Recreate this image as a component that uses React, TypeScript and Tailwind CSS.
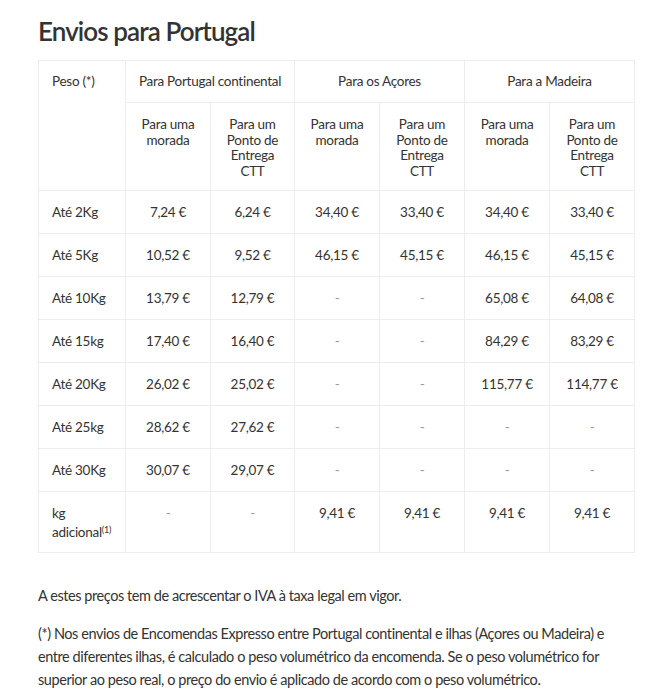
import React from "react";

const rows: { label: React.ReactNode; v: string[] }[] = [
  { label: "Até 2Kg", v: ["7,24 €", "6,24 €", "34,40 €", "33,40 €", "34,40 €", "33,40 €"] },
  { label: "Até 5Kg", v: ["10,52 €", "9,52 €", "46,15 €", "45,15 €", "46,15 €", "45,15 €"] },
  { label: "Até 10Kg", v: ["13,79 €", "12,79 €", "-", "-", "65,08 €", "64,08 €"] },
  { label: "Até 15kg", v: ["17,40 €", "16,40 €", "-", "-", "84,29 €", "83,29 €"] },
  { label: "Até 20Kg", v: ["26,02 €", "25,02 €", "-", "-", "115,77 €", "114,77 €"] },
  { label: "Até 25kg", v: ["28,62 €", "27,62 €", "-", "-", "-", "-"] },
  { label: "Até 30Kg", v: ["30,07 €", "29,07 €", "-", "-", "-", "-"] },
];

const sub = ["Para uma morada", "Para um Ponto de Entrega CTT"];

export default function App() {
  return (
    <div
      className="w-[653px] bg-white text-[#333333] px-[38px] pt-[14px] pb-[20px]"
      style={{ fontFamily: "Lato, 'Noto Sans', sans-serif" }}
    >
      <h1 className="text-[26px] leading-[34px] font-semibold tracking-[-0.035em] text-[#333333] mb-[12px]">
        Envios para Portugal
      </h1>
      <table className="w-[596px] border-collapse table-fixed text-[13.5px] tracking-[-0.02em]">
        <colgroup>
          <col className="w-[87px]" />
          <col className="w-[85px]" />
          <col className="w-[84px]" />
          <col className="w-[85px]" />
          <col className="w-[85px]" />
          <col className="w-[85px]" />
          <col className="w-[85px]" />
        </colgroup>
        <thead>
          <tr className="h-[42px]">
            <th
              rowSpan={2}
              className="border border-[#ededed] align-top text-left font-normal pl-[13px] pt-[12px] leading-[17px]"
            >
              Peso (*)
            </th>
            {["Para Portugal continental", "Para os Açores", "Para a Madeira"].map((t) => (
              <th
                key={t}
                colSpan={2}
                className="border border-[#ededed] align-top text-center font-normal pt-[12px] leading-[17px]"
              >
                {t}
              </th>
            ))}
          </tr>
          <tr className="h-[88px]">
            {[0, 1, 2].flatMap((g) =>
              sub.map((s, i) => (
                <th
                  key={`${g}-${i}`}
                  className="border border-[#ededed] align-top text-center font-normal pt-[14px] px-[10px] leading-[15.5px]"
                >
                  {s}
                </th>
              ))
            )}
          </tr>
        </thead>
        <tbody>
          {rows.map((r, ri) => (
            <tr key={ri} className="h-[43px]">
              <td className="border border-[#ededed] pl-[13px] align-middle">{r.label}</td>
              {r.v.map((x, i) => (
                <td
                  key={i}
                  className={`border border-[#ededed] text-center align-middle ${
                    x === "-" ? "text-[#9a9a9a]" : ""
                  }`}
                >
                  {x}
                </td>
              ))}
            </tr>
          ))}
          <tr className="h-[61px]">
            <td className="border border-[#ededed] pl-[13px] align-top pt-[12px] leading-[19px]">
              kg
              <br />
              adicional<sup className="text-[9px]">(1)</sup>
            </td>
            {["-", "-", "9,41 €", "9,41 €", "9,41 €", "9,41 €"].map((x, i) => (
              <td
                key={i}
                className={`border border-[#ededed] text-center align-top pt-[12px] leading-[19px] ${
                  x === "-" ? "text-[#9a9a9a]" : ""
                }`}
              >
                {x}
              </td>
            ))}
          </tr>
        </tbody>
      </table>
      <p className="mt-[31px] text-[14.5px] leading-[23px] tracking-[-0.03em]">
        A estes preços tem de acrescentar o IVA à taxa legal em vigor.
      </p>
      <p className="mt-[15px] text-[14.5px] leading-[23px] tracking-[-0.03em]">
        (*) Nos envios de Encomendas Expresso entre Portugal continental e ilhas (Açores ou Madeira) e
        entre diferentes ilhas, é calculado o peso volumétrico da encomenda. Se o peso volumétrico for
        superior ao peso real, o preço do envio é aplicado de acordo com o peso volumétrico.
      </p>
    </div>
  );
}
